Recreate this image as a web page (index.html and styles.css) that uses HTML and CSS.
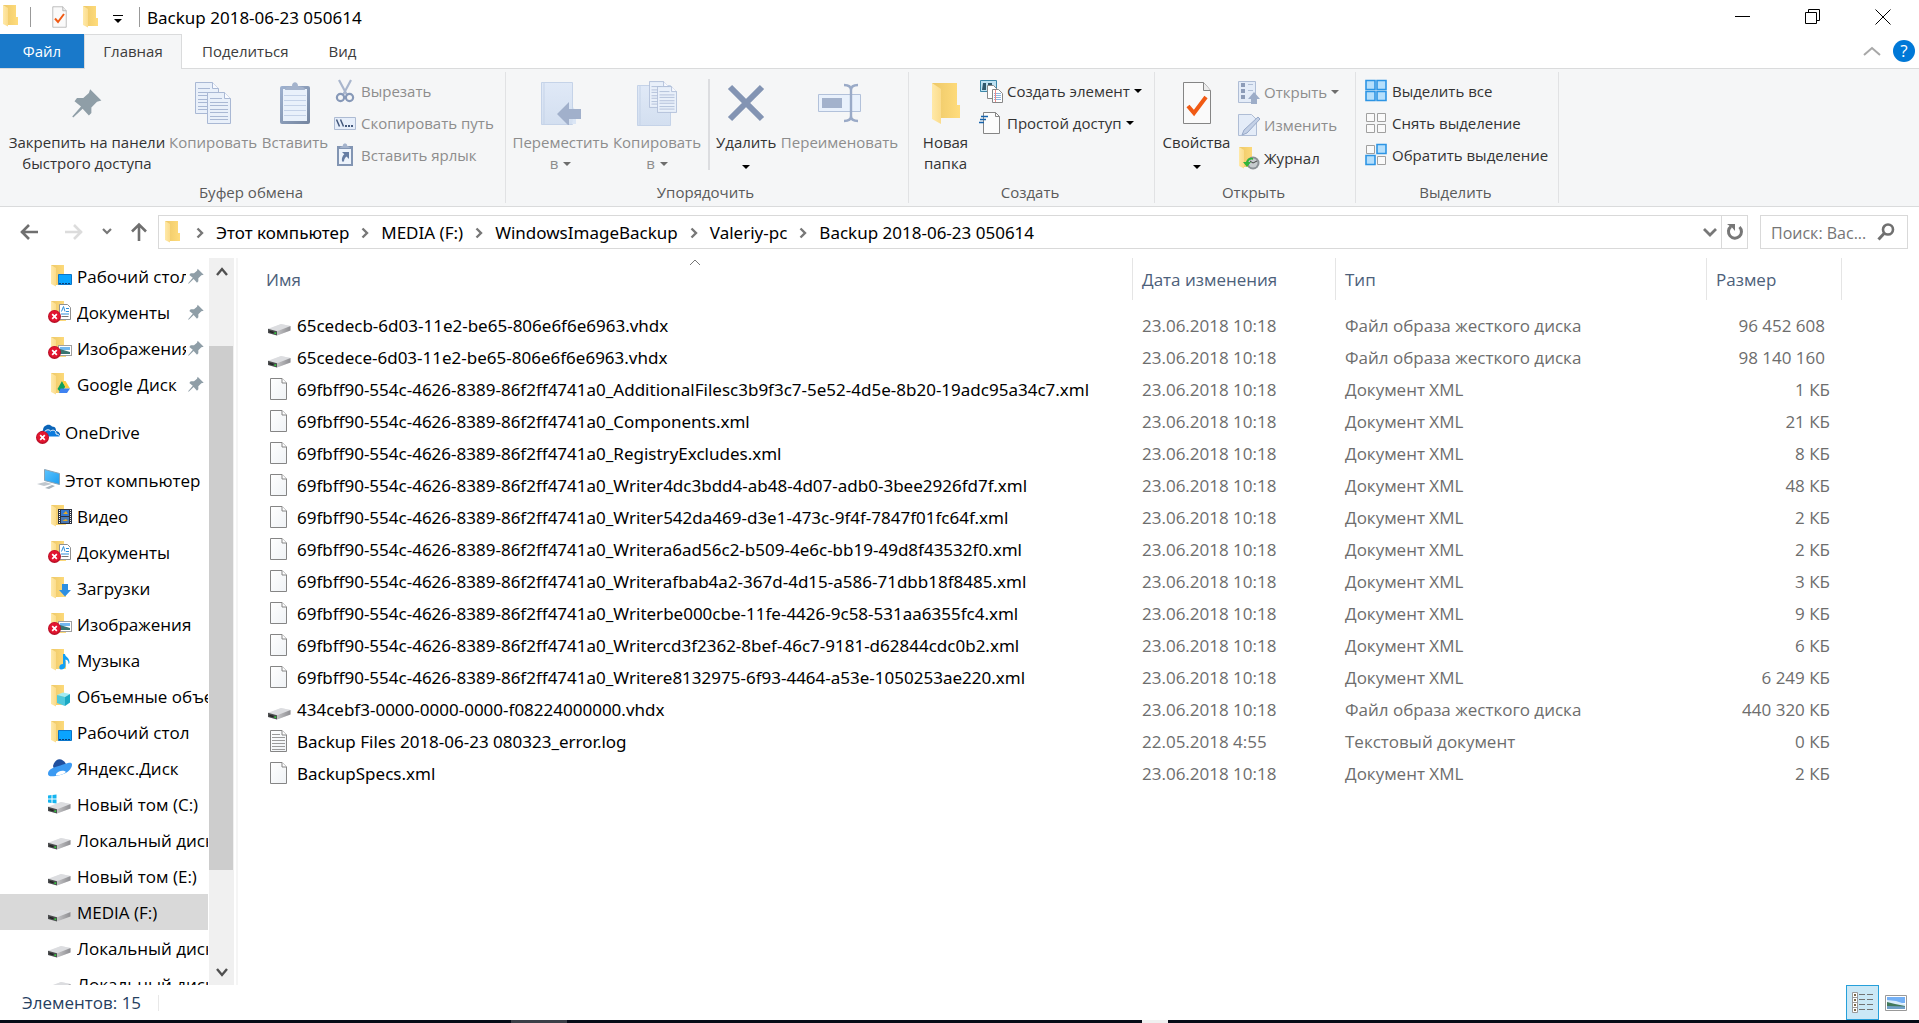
FILE: index.html
```html
<!DOCTYPE html>
<html lang="ru">
<head>
<meta charset="utf-8">
<meta name="viewport" content="width=device-width, initial-scale=1">
<title>Backup 2018-06-23 050614</title>
<link rel="stylesheet" href="styles.css">
</head>
<body>
<svg class="sprite" aria-hidden="true">
  <defs>
    <linearGradient id="g-folder" x1="0" x2="1"><stop offset="0" stop-color="#edc868"/><stop offset="1" stop-color="#ffdc7c"/></linearGradient>
    <linearGradient id="g-flap" x1="0" x2="1"><stop offset="0" stop-color="#ffe9a8"/><stop offset="1" stop-color="#fbdc8c"/></linearGradient>
    <linearGradient id="g-drive" x1="0" x2="1"><stop offset="0" stop-color="#c4c4c6"/><stop offset="1" stop-color="#8e8e92"/></linearGradient>
    <linearGradient id="g-page" x1="0" y1="0" x2="1" y2="1"><stop offset="0" stop-color="#ffffff"/><stop offset="1" stop-color="#eff2f5"/></linearGradient>
    <linearGradient id="g-clip" x1="0" y1="0" x2="1" y2="1"><stop offset="0" stop-color="#9fb2d0"/><stop offset="1" stop-color="#74859f"/></linearGradient>
    <linearGradient id="g-screen" x1="0" y1="0" x2="1" y2="1"><stop offset="0" stop-color="#5cc4ff"/><stop offset="1" stop-color="#1d9df0"/></linearGradient>
    <linearGradient id="g-book" x1="0" y1="0" x2="0" y2="1"><stop offset="0" stop-color="#e0e9f7"/><stop offset="1" stop-color="#d3dff0"/></linearGradient>
  </defs>
  <symbol id="folder" viewBox="0 0 24 24">
    <path d="M3 1h13v12h2v8H6z" fill="url(#g-folder)"/>
    <path d="M3 1l5 3v18.500L3 20z" fill="url(#g-flap)"/>
  </symbol>
  <symbol id="error" viewBox="0 0 24 24">
    <circle cx="6.500" cy="16.500" r="6.500" fill="#b80e26"/><circle cx="6.500" cy="16" r="5.500" fill="#e2152f"/>
    <path d="M4.200 14.200l4.600 4.600m0-4.600l-4.600 4.600" stroke="#fff" stroke-width="1.700"/>
  </symbol>
  <symbol id="page" viewBox="0 1 24 24">
    <path d="M2.500 1.500h11.500l4.500 4.500v16.500h-16z" fill="url(#g-page)" stroke="#858585"/>
    <path d="M14 1.500V6h4.500" fill="#fff" stroke="#858585"/>
  </symbol>
  <symbol id="log" viewBox="0 0 24 24">
    <use href="#page"/>
    <path d="M4 4.500h8m-8 3h13m-13 3h13m-13 3h13m-13 3h13m-13 3h13" stroke="#9a9a9a"/>
  </symbol>
  <symbol id="drive" viewBox="0 0 24 24">
    <path d="M0 15.500l13-5.500 9.500 2v4.500L9 21.500 0 19z" fill="#e8e8ea"/>
    <path d="M0 14.800l13-4.800 9.500 2L9 17.200z" fill="#dcdde0"/>
    <path d="M9 17.200l13.500-5.200v4.500L9 21.500z" fill="url(#g-drive)"/>
    <path d="M0 14.800l9 2.400v4.300l-9-2.400z" fill="#4b4d4f"/>
    <path d="M1.500 17.500l4 1" stroke="#222" stroke-width="1.400"/><path d="M6.500 19l1.600.4" stroke="#2fd43a" stroke-width="1.600"/>
  </symbol>
  <symbol id="pin" viewBox="0 0 24 24">
    <path d="M14.500 1l9 9-3.500 1-4.500 4.500V20l-2 2-5-5.500L1 23.500l-.8-.8 7-8L2 10.500 4 8h5l4.500-4z" fill="#8f9ea7"/>
  </symbol>
  <symbol id="doc-folder" viewBox="0 0 24 24">
    <use href="#folder"/><path d="M11.500 4.500h8l3 3v12h-11z" fill="#fff" stroke="#909090"/>
    <path d="M13.500 11.500l2-5 1.500 5m1-3h3m-3 3h3m-8 2.500h8" stroke="#2f8fd8" fill="none"/><path d="M13.500 16.500h7" stroke="#777"/>
    <use href="#error"/>
  </symbol>
  <symbol id="pic-folder" viewBox="0 0 24 24">
    <use href="#folder"/><rect x="10.500" y="9.500" width="13" height="10" fill="#fff" stroke="#a0a0a0"/>
    <path d="M12 11h10v3H12z" fill="#72b7ee"/><path d="M12 13l5 1.500 5 1.500v2H12z" fill="#39746f"/><use href="#error"/>
  </symbol>
  <symbol id="desk-folder" viewBox="0 0 24 24">
    <use href="#folder"/><path d="M10.500 10.500h13v10h-13z" fill="#0aa4ff" stroke="#0b75c9"/><path d="M11 19.500h12" stroke="#0b3f77" stroke-dasharray="2 1"/>
  </symbol>
  <symbol id="gdrive-folder" viewBox="0 0 24 24">
    <use href="#folder"/><path d="M14 9l3.500 5.500L13 21l-3.500-4z" fill="#11a05c"/><path d="M14 9h3.500l4.500 7.500h-4z" fill="#ffcd40"/><path d="M12.500 16.500H22L19 21h-8z" fill="#3e82f1"/>
  </symbol>
  <symbol id="video-folder" viewBox="0 0 24 24">
    <use href="#folder"/><path d="M10 5h14v15H10z" fill="#2e3340"/><path d="M13 6h8v6h-8z" fill="#3577cf"/><path d="M13 13h8v6h-8z" fill="#4979b5"/>
    <path d="M15 10l3-3 2 3zM14 17l4-2 2 2z" fill="#e4aa2a"/><path d="M11.500 6v13m11-13v13" stroke="#fff" stroke-dasharray="1 1"/>
  </symbol>
  <symbol id="down-folder" viewBox="0 0 24 24">
    <use href="#folder"/><path d="M14 8h6v6h3l-6 6.500L11 14h3z" fill="#2d8fe2"/>
  </symbol>
  <symbol id="music-folder" viewBox="0 0 24 24">
    <use href="#folder"/><path d="M15 6h2c0 3 5 3.500 4.500 9l-1 1c0-3-1-4-3-4.500V18c0 2-2 3.500-4.500 3.500S10.500 16 15 16z" fill="#12a0f5"/>
  </symbol>
  <symbol id="cube-folder" viewBox="0 0 24 24">
    <use href="#folder"/><path d="M9 11l6-2.500 7 1.500-5 3z" fill="#a3ebf2"/><path d="M9 11l8 2v9l-8-3z" fill="#4fc8dc"/><path d="M17 13l5-3v8.500l-5 3.500z" fill="#1ba9c4"/>
  </symbol>
  <symbol id="onedrive" viewBox="0 0 24 24">
    <path d="M7 10.500C7 5.500 13 3 16 6.500c4 0 4 3 4 4.500 5 1 5 5.500 2 6H6c-4-1-3.500-6 1-6.500z" fill="#0a64b8"/>
    <path d="M8 13c1-3.500 5-4 6.500-2 3-2 6 0 5.500 3 4 .2 4 3 2.500 3H9c-3-.5-3-3.500-1-4z" fill="#0c7bdd" stroke="#fff"/>
    <use href="#error" y="1"/>
  </symbol>
  <symbol id="pc" viewBox="0 0 24 24">
    <path d="M8.500 1.500l15 4v11l-15-4z" fill="url(#g-screen)" stroke="#8aa3b5"/><path d="M1 16l8-2 7 2-8 2z" fill="#c0c7cd"/><path d="M9 20l7-3 3 1-6 3z" fill="#a9b3bb"/>
  </symbol>
  <symbol id="yadisk" viewBox="0 0 24 24">
    <path d="M5 10C7 2 14 1 18 8l-3 5H6z" fill="#1f4f9e"/><path d="M0 18c0-4 4-6 9-7.500 6-1.500 14-6 15-2.500.5 4-4 9-10 10.500C8 20 0 22 0 18z" fill="#3b9af2"/><path d="M8 18c3-4 8-4 10-2-2 2-6 3.500-10 3.500z" fill="#fff"/>
  </symbol>
  <symbol id="windrive" viewBox="0 0 24 24">
    <use href="#drive"/><path d="M0 3.500l3.500-.5v3.500H0zM4.500 3L8.500 2.500v4h-4zM0 7.500h3.500V11L0 10.500zM4.500 7.500h4v4l-4-.5z" fill="#14b4f0"/>
  </symbol>
  <symbol id="caret" viewBox="0 0 8 4"><path d="M0 0h8L4 4z" fill="currentColor"/></symbol>
  <symbol id="chevron" viewBox="0 0 8 12"><path d="M1.500 1.500L6 6l-4.500 4.500" fill="none" stroke="#777" stroke-width="2.400"/></symbol>
  <symbol id="check-page" viewBox="0 0 34 44">
    <path d="M1.500 1.500h20l7 8v33h-27z" fill="#fafafa" stroke="#858585" transform="translate(2)"/><path d="M23.500 1.500v8h7" fill="#ececec" stroke="#858585"/>
    <path d="M8 25l6 7 12-16" fill="none" stroke="#f05a14" stroke-width="4"/>
  </symbol>
  <symbol id="lined-page" viewBox="0 0 24 32">
    <path d="M.5.500h17l6 6v25H.5z" fill="#e9f0fa" stroke="#a9b8d4"/><path d="M17.500.500v6h6" fill="#f8faff" stroke="#a9b8d4"/>
    <path d="M3 6.500h12M3 10.500h18M3 13.500h18M3 17.500h18M3 20.500h18M3 24.500h18M3 27.500h18" stroke="#a9b8d4"/>
  </symbol>
</svg>

<div class="window">
  <header class="titlebar">
    <div class="quick">
      <svg class="i24 quick-app"><use href="#folder"/></svg>
      <span class="tick"></span>
      <button type="button" class="plain quick-check" aria-label="Свойства"><svg width="17" height="22"><use href="#check-page"/></svg></button>
      <button type="button" class="plain" aria-label="Новая папка"><svg class="i24"><use href="#folder"/></svg></button>
      <button type="button" class="plain quick-more" aria-label="Настройка панели"><svg width="10" height="8" viewBox="0 0 10 8"><path d="M0 .500h10" stroke="#000"/><path d="M1 4h8L5 8z"/></svg></button>
      <span class="tick"></span>
    </div>
    <h1 class="title">Backup 2018-06-23 050614</h1>
    <div class="controls">
      <button type="button" class="plain control" aria-label="Свернуть"><svg width="16" height="16"><path d="M0 7.500h15" stroke="#000"/></svg></button>
      <button type="button" class="plain control" aria-label="Свернуть в окно"><svg width="16" height="16"><path d="M.5 3.500h11v11H.5zM3.500 3.500v-3h11v11h-3" fill="none" stroke="#000"/></svg></button>
      <button type="button" class="plain control" aria-label="Закрыть"><svg width="16" height="16"><path d="M.5.500l15 15m0-15l-15 15" stroke="#000"/></svg></button>
    </div>
  </header>

  <nav class="tabs">
    <button type="button" class="tab tab-file">Файл</button>
    <button type="button" class="tab tab-active">Главная</button>
    <button type="button" class="tab">Поделиться</button>
    <button type="button" class="tab">Вид</button>
    <div class="tabs-end">
      <button type="button" class="plain" aria-label="Свернуть ленту"><svg width="18" height="10"><path d="M1 9l8-7 8 7" fill="none" stroke="#a8a8a8" stroke-width="2"/></svg></button>
      <button type="button" class="plain help" aria-label="Справка">?</button>
    </div>
  </nav>

  <section class="ribbon">
    <section class="group group-clipboard">
      <div class="group-body">
        <button type="button" class="big"><span class="big-icon"><svg width="30" height="30"><use href="#pin"/></svg></span>Закрепить на панели<br>быстрого доступа</button>
        <button type="button" class="big" disabled><span class="big-icon"><svg width="36" height="42"><use href="#lined-page" width="24" height="32"/><use href="#lined-page" x="12" y="10" width="24" height="32"/></svg></span>Копировать</button>
        <button type="button" class="big" disabled><span class="big-icon"><svg width="30" height="44"><rect y="5" width="30" height="38" rx="2" fill="url(#g-clip)"/><path d="M3 8h24v32H3z" fill="#e9f1fb"/><path d="M4 14.500h22m-22 5h22m-22 5h22m-22 5h22m-22 5h22" stroke="#c4d2e8"/><path d="M5 9c0-4 5-3 7-4 0-5 6-5 6 0 2 1 7 0 7 4z" fill="#a4b3cc"/></svg></span>Вставить</button>
        <div class="stack">
          <button type="button" class="small" disabled><svg class="i24" viewBox="0 0 24 24"><path d="M6 1l8 15M18 1l-8 15" stroke="#a9b6cd" stroke-width="2.200"/><circle cx="7.500" cy="18.500" r="3.600" fill="none" stroke="#8799b8" stroke-width="2.200"/><circle cx="16.500" cy="18.500" r="3.600" fill="none" stroke="#8799b8" stroke-width="2.200"/></svg>Вырезать</button>
          <button type="button" class="small" disabled><svg class="i24" viewBox="0 0 24 24"><path d="M1.500 6.500h21v12h-21z" fill="#e6eefa" stroke="#adbbd3"/><path d="M3.500 8.500l3 7m1-7l3 7" stroke="#43587c" stroke-width="1.500"/><path d="M12 15h2m1 0h2m1 0h2" stroke="#43587c" stroke-width="2"/></svg>Скопировать путь</button>
          <button type="button" class="small" disabled><svg class="i24" viewBox="0 0 24 24"><rect x="4" y="3" width="16" height="20" fill="#8295b3"/><path d="M6 6h12v15H6z" fill="#edf3fb"/><path d="M7 5c0-2 3-1 3-3 0-2 4-2 4 0 0 2 3 1 3 3z" fill="#a4b3cc"/><path d="M9 9h7v7l-2.500-2.500C12 15 11 16 11 18.500H9C8.500 15 9.500 13 11.300 11.300z" fill="#667da3"/></svg>Вставить ярлык</button>
        </div>
      </div>
      <h2 class="group-label">Буфер обмена</h2>
    </section>

    <section class="group group-organize">
      <div class="group-body">
        <button type="button" class="big" disabled><span class="big-icon"><svg width="40" height="44"><path d="M.5 1.500h31v42H.5z" fill="url(#g-book)" stroke="#c5d3e8"/><path d="M3 2v41" stroke="#c5d3e8"/><path d="M32 26l3 4v13h-4z" fill="#dbe6f5"/><path d="M16 33l12-12v7h12v10H28v7z" fill="#a1b0cb"/></svg></span>Переместить<br><span class="with-caret">в <svg class="caret"><use href="#caret"/></svg></span></button>
        <button type="button" class="big" disabled><span class="big-icon"><svg width="40" height="45"><path d="M.5 4.500h33v40H.5z" fill="url(#g-book)" stroke="#c5d3e8"/><path d="M3 5v40" stroke="#c5d3e8"/><use href="#lined-page" x="12" width="20" height="27"/><use href="#lined-page" x="20" y="5" width="20" height="27"/></svg></span>Копировать<br><span class="with-caret">в <svg class="caret"><use href="#caret"/></svg></span></button>
        <span class="rule"></span>
        <button type="button" class="big"><span class="big-icon"><svg width="38" height="38"><path d="M3 3l32 32M35 3L3 35" stroke="#8394b3" stroke-width="6"/></svg></span>Удалить<br><span class="with-caret"><svg class="caret"><use href="#caret"/></svg></span></button>
        <button type="button" class="big" disabled><span class="big-icon"><svg width="44" height="40"><path d="M.5 11.500h42v17H.5z" fill="#e9f1fc" stroke="#b2c1da"/><path d="M4 15h20v10H4z" fill="#a3b2cc"/><path d="M26 2c4 0 7 1 7 5v26c0 4-3 5-7 5M40 2c-4 0-7 1-7 5v26c0 4 3 5 7 5" fill="none" stroke="#9aaac7" stroke-width="2.400"/></svg></span>Переименовать</button>
      </div>
      <h2 class="group-label">Упорядочить</h2>
    </section>

    <section class="group group-new">
      <div class="group-body">
        <button type="button" class="big"><span class="big-icon"><svg width="32" height="44"><path d="M2 2h25v22h3v13H8z" fill="url(#g-folder)"/><path d="M2 2l9 6v35L2 38z" fill="url(#g-flap)"/></svg></span>Новая<br>папка</button>
        <div class="stack">
          <button type="button" class="small"><svg class="i24" viewBox="0 0 24 24"><path d="M1.500 1.500h16v11h-16z" fill="#bfe2f2" stroke="#3c87a8"/><path d="M4 4h3v7H3zM9 4h4v3H9z" fill="#31596d"/><path d="M8.500 6.500h6l4 4v9h-10z" fill="#fff" stroke="#888"/><path d="M13.500 10.500h6l4 4v9h-10z" fill="#fff" stroke="#888"/><path d="M15 14.500h7m-7 2h7m-7 2h7m-7 2h7" stroke="#8fb5df"/><path d="M16.500 11v12" stroke="#f08a8a"/></svg>Создать элемент<svg class="caret"><use href="#caret"/></svg></button>
          <button type="button" class="small"><svg class="i24" viewBox="0 0 24 24"><path d="M4.500 1.500h12l4 4v17h-16z" fill="#fcfcfc" stroke="#858585"/><path d="M16.500 1.500v4h4" fill="none" stroke="#858585"/><path d="M2 5.500h7m-8 3h6m-7 3h5" stroke="#1763ac" stroke-width="1.500"/></svg>Простой доступ<svg class="caret"><use href="#caret"/></svg></button>
        </div>
      </div>
      <h2 class="group-label">Создать</h2>
    </section>

    <section class="group group-open">
      <div class="group-body">
        <button type="button" class="big"><span class="big-icon"><svg width="34" height="44"><use href="#check-page"/></svg></span>Свойства<br><span class="with-caret"><svg class="caret"><use href="#caret"/></svg></span></button>
        <div class="stack stack-loose">
          <button type="button" class="small" disabled><svg class="i24" viewBox="0 0 24 24"><path d="M2.500 1.500h17v21h-17z" fill="#e4ecf8" stroke="#afbdd5"/><path d="M5 3h4v4H5zM5 9h4v4H5zM5 15h4v4H5z" fill="#8d9cb8"/><path d="M12 4.500h5m-5 6h5" stroke="#b0bfd6"/><path d="M18 12l6 7h-3v5h-6v-5h-3z" fill="#9dadc8"/></svg>Открыть<svg class="caret"><use href="#caret"/></svg></button>
          <button type="button" class="small" disabled><svg class="i24" viewBox="0 0 24 24"><path d="M2.500 1.500h13l5 5v16h-18z" fill="#e4ecf8" stroke="#afbdd5"/><path d="M22 4l2 2L11 20l-5 2 2-5z" fill="#c3d0e6" stroke="#97a9c8"/></svg>Изменить</button>
          <button type="button" class="small"><svg class="i24" viewBox="0 0 24 24"><use href="#folder"/><circle cx="17" cy="17" r="6.500" fill="#8b9196"/><circle cx="17" cy="17" r="4.500" fill="#c6cbce"/><path d="M14 15l3 2 4-2" stroke="#444" fill="none"/><path d="M17 12c-4-1-6 1-7 4H7l4 5 4-5h-3c1-2 3-3 5-2z" fill="#2fb43b"/></svg>Журнал</button>
        </div>
      </div>
      <h2 class="group-label">Открыть</h2>
    </section>

    <section class="group group-select">
      <div class="group-body">
        <div class="stack">
          <button type="button" class="small"><svg class="i24" viewBox="0 0 24 24"><path d="M2 1.500h9v9H2zM13 1.500h9v9h-9zM2 12.500h9v9H2zM13 12.500h9v9h-9z" fill="#b5dffc" stroke="#2d95e4" stroke-width="1.600"/></svg>Выделить все</button>
          <button type="button" class="small"><svg class="i24" viewBox="0 0 24 24"><path d="M2.500 2.500h8v8h-8zM13.500 2.500h8v8h-8zM2.500 13.500h8v8h-8zM13.500 13.500h8v8h-8z" fill="#fafafa" stroke="#a0a0a0"/></svg>Снять выделение</button>
          <button type="button" class="small"><svg class="i24" viewBox="0 0 24 24"><path d="M2.500 2.500h8v8h-8zM13.500 13.500h8v8h-8z" fill="#fafafa" stroke="#a0a0a0"/><path d="M13 1.500h9v9h-9zM2 12.500h9v9H2z" fill="#b5dffc" stroke="#2d95e4" stroke-width="1.600"/></svg>Обратить выделение</button>
        </div>
      </div>
      <h2 class="group-label">Выделить</h2>
    </section>
  </section>

  <div class="location">
    <div class="history">
      <button type="button" class="plain back" aria-label="Назад"><svg width="20" height="18"><path d="M19 9H2m8-7L3 9l7 7" fill="none" stroke="#6f6f6f" stroke-width="2.600"/></svg></button>
      <button type="button" class="plain" aria-label="Вперед"><svg width="20" height="18"><path d="M1 9h17m-8-7l7 7-7 7" fill="none" stroke="#dcdcdc" stroke-width="2.600"/></svg></button>
      <button type="button" class="plain" aria-label="Последние"><svg width="10" height="8"><path d="M1 1l4 4 4-4" fill="none" stroke="#777" stroke-width="2.200"/></svg></button>
      <button type="button" class="plain" aria-label="Вверх"><svg width="18" height="20"><path d="M9 19V3M2 9.500l7-7 7 7" fill="none" stroke="#6f6f6f" stroke-width="2.600"/></svg></button>
    </div>
    <div class="address">
      <svg class="i24"><use href="#folder"/></svg>
      <ol class="crumbs">
        <li class="crumb"><svg class="chevron"><use href="#chevron"/></svg><a href="#pc">Этот компьютер</a></li>
        <li class="crumb"><svg class="chevron"><use href="#chevron"/></svg><a href="#f">MEDIA (F:)</a></li>
        <li class="crumb"><svg class="chevron"><use href="#chevron"/></svg><a href="#wib">WindowsImageBackup</a></li>
        <li class="crumb"><svg class="chevron"><use href="#chevron"/></svg><a href="#vpc">Valeriy-pc</a></li>
        <li class="crumb"><svg class="chevron"><use href="#chevron"/></svg><a href="#backup">Backup 2018-06-23 050614</a></li>
      </ol>
      <button type="button" class="plain drop" aria-label="Предыдущие расположения"><svg width="14" height="10"><path d="M1 2l6 6 6-6" fill="none" stroke="#777" stroke-width="2.800"/></svg></button>
      <button type="button" class="plain refresh" aria-label="Обновить"><svg width="18" height="18"><path d="M5 3.500A6.500 6.500 0 1 0 13.500 4" fill="none" stroke="#777" stroke-width="3"/><path d="M1 1h8v7L6.500 5z" fill="#777"/></svg></button>
    </div>
    <label class="search">
      <input type="text" placeholder="Поиск: Вас..." aria-label="Поиск">
      <svg width="18" height="18"><circle cx="11" cy="6.500" r="5" fill="none" stroke="#707070" stroke-width="2.600"/><path d="M7.500 10L1.500 16.500" stroke="#707070" stroke-width="3"/></svg>
    </label>
  </div>

  <div class="content">
    <aside class="sidebar">
      <ul class="tree">
        <li class="node"><svg class="i24"><use href="#desk-folder"/></svg><span class="node-text">Рабочий стол</span><svg class="node-pin"><use href="#pin"/></svg></li>
        <li class="node"><svg class="i24"><use href="#doc-folder"/></svg><span class="node-text">Документы</span><svg class="node-pin"><use href="#pin"/></svg></li>
        <li class="node"><svg class="i24"><use href="#pic-folder"/></svg><span class="node-text">Изображения</span><svg class="node-pin"><use href="#pin"/></svg></li>
        <li class="node"><svg class="i24"><use href="#gdrive-folder"/></svg><span class="node-text">Google Диск</span><svg class="node-pin"><use href="#pin"/></svg></li>
        <li class="node node-root"><svg class="i24"><use href="#onedrive"/></svg><span class="node-text">OneDrive</span></li>
        <li class="node node-root"><svg class="i24"><use href="#pc"/></svg><span class="node-text">Этот компьютер</span></li>
        <li class="node"><svg class="i24"><use href="#video-folder"/></svg><span class="node-text">Видео</span></li>
        <li class="node"><svg class="i24"><use href="#doc-folder"/></svg><span class="node-text">Документы</span></li>
        <li class="node"><svg class="i24"><use href="#down-folder"/></svg><span class="node-text">Загрузки</span></li>
        <li class="node"><svg class="i24"><use href="#pic-folder"/></svg><span class="node-text">Изображения</span></li>
        <li class="node"><svg class="i24"><use href="#music-folder"/></svg><span class="node-text">Музыка</span></li>
        <li class="node"><svg class="i24"><use href="#cube-folder"/></svg><span class="node-text">Объемные объекты</span></li>
        <li class="node"><svg class="i24"><use href="#desk-folder"/></svg><span class="node-text">Рабочий стол</span></li>
        <li class="node"><svg class="i24"><use href="#yadisk"/></svg><span class="node-text">Яндекс.Диск</span></li>
        <li class="node"><svg class="i24"><use href="#windrive"/></svg><span class="node-text">Новый том (C:)</span></li>
        <li class="node"><svg class="i24"><use href="#drive"/></svg><span class="node-text">Локальный диск (D:)</span></li>
        <li class="node"><svg class="i24"><use href="#drive"/></svg><span class="node-text">Новый том (E:)</span></li>
        <li class="node node-current"><svg class="i24"><use href="#drive"/></svg><span class="node-text">MEDIA (F:)</span></li>
        <li class="node"><svg class="i24"><use href="#drive"/></svg><span class="node-text">Локальный диск (G:)</span></li>
        <li class="node"><svg class="i24"><use href="#drive"/></svg><span class="node-text">Локальный диск (H:)</span></li>
      </ul>
      <div class="scrollbar">
        <button type="button" class="plain scroll-button" aria-label="Прокрутить вверх"><svg width="14" height="12"><path d="M2 9l5-6 5 6" fill="none" stroke="#505050" stroke-width="2.400"/></svg></button>
        <div class="track"><div class="thumb"></div></div>
        <button type="button" class="plain scroll-button" aria-label="Прокрутить вниз"><svg width="14" height="12"><path d="M2 3l5 6 5-6" fill="none" stroke="#505050" stroke-width="2.400"/></svg></button>
      </div>
    </aside>

    <main class="files">
      <table class="list">
        <colgroup><col class="col-name"><col class="col-date"><col class="col-type"><col class="col-size"></colgroup>
        <thead>
          <tr>
            <th scope="col"><div class="head">Имя<svg class="sort" width="13" height="7"><path d="M1 6l5-5 5 5" fill="none" stroke="#777"/></svg></div></th>
            <th scope="col"><div class="head">Дата изменения</div></th>
            <th scope="col"><div class="head">Тип</div></th>
            <th scope="col"><div class="head">Размер</div></th>
          </tr>
        </thead>
        <tbody>
          <tr><td><div class="file"><svg class="i24"><use href="#drive"/></svg>65cedecb-6d03-11e2-be65-806e6f6e6963.vhdx</div></td><td>23.06.2018 10:18</td><td>Файл образа жесткого диска</td><td class="size size-clipped">96 452 608</td></tr>
          <tr><td><div class="file"><svg class="i24"><use href="#drive"/></svg>65cedece-6d03-11e2-be65-806e6f6e6963.vhdx</div></td><td>23.06.2018 10:18</td><td>Файл образа жесткого диска</td><td class="size size-clipped">98 140 160</td></tr>
          <tr><td><div class="file"><svg class="i24"><use href="#page"/></svg>69fbff90-554c-4626-8389-86f2ff4741a0_AdditionalFilesc3b9f3c7-5e52-4d5e-8b20-19adc95a34c7.xml</div></td><td>23.06.2018 10:18</td><td>Документ XML</td><td class="size">1 КБ</td></tr>
          <tr><td><div class="file"><svg class="i24"><use href="#page"/></svg>69fbff90-554c-4626-8389-86f2ff4741a0_Components.xml</div></td><td>23.06.2018 10:18</td><td>Документ XML</td><td class="size">21 КБ</td></tr>
          <tr><td><div class="file"><svg class="i24"><use href="#page"/></svg>69fbff90-554c-4626-8389-86f2ff4741a0_RegistryExcludes.xml</div></td><td>23.06.2018 10:18</td><td>Документ XML</td><td class="size">8 КБ</td></tr>
          <tr><td><div class="file"><svg class="i24"><use href="#page"/></svg>69fbff90-554c-4626-8389-86f2ff4741a0_Writer4dc3bdd4-ab48-4d07-adb0-3bee2926fd7f.xml</div></td><td>23.06.2018 10:18</td><td>Документ XML</td><td class="size">48 КБ</td></tr>
          <tr><td><div class="file"><svg class="i24"><use href="#page"/></svg>69fbff90-554c-4626-8389-86f2ff4741a0_Writer542da469-d3e1-473c-9f4f-7847f01fc64f.xml</div></td><td>23.06.2018 10:18</td><td>Документ XML</td><td class="size">2 КБ</td></tr>
          <tr><td><div class="file"><svg class="i24"><use href="#page"/></svg>69fbff90-554c-4626-8389-86f2ff4741a0_Writera6ad56c2-b509-4e6c-bb19-49d8f43532f0.xml</div></td><td>23.06.2018 10:18</td><td>Документ XML</td><td class="size">2 КБ</td></tr>
          <tr><td><div class="file"><svg class="i24"><use href="#page"/></svg>69fbff90-554c-4626-8389-86f2ff4741a0_Writerafbab4a2-367d-4d15-a586-71dbb18f8485.xml</div></td><td>23.06.2018 10:18</td><td>Документ XML</td><td class="size">3 КБ</td></tr>
          <tr><td><div class="file"><svg class="i24"><use href="#page"/></svg>69fbff90-554c-4626-8389-86f2ff4741a0_Writerbe000cbe-11fe-4426-9c58-531aa6355fc4.xml</div></td><td>23.06.2018 10:18</td><td>Документ XML</td><td class="size">9 КБ</td></tr>
          <tr><td><div class="file"><svg class="i24"><use href="#page"/></svg>69fbff90-554c-4626-8389-86f2ff4741a0_Writercd3f2362-8bef-46c7-9181-d62844cdc0b2.xml</div></td><td>23.06.2018 10:18</td><td>Документ XML</td><td class="size">6 КБ</td></tr>
          <tr><td><div class="file"><svg class="i24"><use href="#page"/></svg>69fbff90-554c-4626-8389-86f2ff4741a0_Writere8132975-6f93-4464-a53e-1050253ae220.xml</div></td><td>23.06.2018 10:18</td><td>Документ XML</td><td class="size">6 249 КБ</td></tr>
          <tr><td><div class="file"><svg class="i24"><use href="#drive"/></svg>434cebf3-0000-0000-0000-f08224000000.vhdx</div></td><td>23.06.2018 10:18</td><td>Файл образа жесткого диска</td><td class="size">440 320 КБ</td></tr>
          <tr><td><div class="file"><svg class="i24"><use href="#log"/></svg>Backup Files 2018-06-23 080323_error.log</div></td><td>22.05.2018 4:55</td><td>Текстовый документ</td><td class="size">0 КБ</td></tr>
          <tr><td><div class="file"><svg class="i24"><use href="#page"/></svg>BackupSpecs.xml</div></td><td>23.06.2018 10:18</td><td>Документ XML</td><td class="size">2 КБ</td></tr>
        </tbody>
      </table>
    </main>
  </div>

  <footer class="status">
    <span class="count">Элементов: 15</span>
    <div class="views">
      <button type="button" class="plain view view-active" aria-label="Таблица"><svg width="22" height="22"><path d="M.5.500h5v20h-5zM.5 5.500h5m-5 5h5m-5 5h5" fill="#fff" stroke="#9a9a9a"/><path d="M2 3h2m-2 5h2m-2 5h2m-2 5h2" stroke="#7b6a4a" stroke-width="2"/><path d="M7 2.500h6m2 0h6m-14 5h6m2 0h6m-14 5h6m2 0h6m-14 5h6m2 0h6" stroke="#737373"/></svg></button>
      <button type="button" class="plain view" aria-label="Крупные значки"><svg width="22" height="16"><path d="M.5.500h21v15H.5z" fill="#fff" stroke="#999"/><path d="M2 2h18v6H2z" fill="#74b0f5"/><path d="M2 5l9 1 9 3v2H2z" fill="#d9ecfb"/><path d="M2 7l8 2 10 2v1H2z" fill="#42795a"/><path d="M2 11l18 .5V14H2z" fill="#6f9fc6"/></svg></button>
    </div>
  </footer>
  <div class="taskbar"><span class="task task-open"></span><span class="task task-active"></span></div>
</div>
</body>
</html>
```
FILE: styles.css
```css
* { box-sizing: border-box; }

body {
  margin: 0;
  font: 17px/24px "Open Sans", "Noto Sans", sans-serif;
  color: #000;
  background: #fff;
}

h1, h2, ol, ul { margin: 0; padding: 0; font: inherit; list-style: none; }
button { font: inherit; color: inherit; background: none; border: 0; padding: 0; }
a { color: inherit; text-decoration: none; }
svg { display: block; flex: none; }

.sprite { position: absolute; width: 0; height: 0; }
.i24 { width: 24px; height: 24px; }
.plain { display: flex; align-items: center; justify-content: center; }

.window { display: flex; flex-direction: column; height: 100vh; overflow: hidden; }

/* Title bar */
.titlebar { display: flex; align-items: center; height: 34px; flex: none; }
.quick { display: flex; align-items: center; height: 34px; }
.quick-app { margin: 0 6px 2px 0; }
.tick { width: 1px; height: 20px; background: #999; }
.quick-check { margin: 0 12px 0 20px; }
.quick-more { margin: 4px 16px 0 9px; }
.title { flex: 1; padding: 2px 0 0 7px; line-height: 32px; font-family: "Noto Sans", sans-serif; }
.controls { display: flex; gap: 54px; padding-right: 28px; }

/* Ribbon tabs */
.tabs {
  display: flex;
  flex: none;
  height: 35px;
  font-size: 15px;
  color: #3c3c3c;
  border-bottom: 1px solid #dadbdc;
}
.tab { padding: 0 20px; height: 34px; }
.tab-file { width: 84px; color: #fff; background: #1979ca; }
.tab-active {
  width: 98px;
  height: 35px;
  padding: 0 0 2px;
  background: #f5f6f7;
  border: 1px solid #dadbdc;
  border-bottom: 0;
}
.tabs-end { display: flex; align-items: center; gap: 12px; margin-left: auto; padding-right: 4px; }
.help { width: 22px; height: 22px; border-radius: 50%; background: #0078d7; color: #fff; font-size: 17px; }

/* Ribbon */
.ribbon {
  display: flex;
  flex: none;
  height: 138px;
  padding: 3px 0;
  font-size: 15px;
  line-height: 21px;
  color: #333;
  background: #f5f6f7;
  border-bottom: 1px solid #dadbdc;
}
.group { display: flex; flex-direction: column; border-right: 1px solid #e1e2e4; }
.group-body { display: grid; height: 110px; align-items: start; }
.group-label { padding-right: 3px; text-align: center; color: #5a5a5a; }
.group-clipboard { width: 506px; }
.group-clipboard .group-body { grid-template-columns: 164px 88px 76px 1fr; padding-left: 5px; }
.group-organize { width: 403px; }
.group-organize .group-body { grid-template-columns: 103px 90px 14px 60px 1fr; padding: 0 5px 0 3px; }
.group-new { width: 246px; }
.group-new .group-body { grid-template-columns: 67px 1fr; padding-left: 3px; }
.group-open { width: 201px; }
.group-open .group-body { grid-template-columns: 79px 1fr; padding-left: 2px; }
.group-select { width: 203px; }
.group-select .group-body { padding-left: 8px; }

.big { padding-top: 6px; white-space: nowrap; text-align: center; }
.big-icon { display: flex; align-items: center; justify-content: center; height: 50px; margin-bottom: 4px; }
.with-caret { display: inline-flex; align-items: center; justify-content: center; gap: 5px; height: 16px; }
.caret { width: 8px; height: 4px; color: #000; }
.rule { width: 2px; height: 91px; margin-top: 7px; justify-self: center; background: #dcdde0; }
.stack { display: flex; flex-direction: column; padding-top: 3px; }
.stack-loose { gap: 1px; padding-top: 4px; }
.small { display: flex; align-items: center; gap: 4px; height: 32px; white-space: nowrap; }
button:disabled { color: #8d8d8d; }
button:disabled .caret { color: #6d6d6d; }

/* Address row */
.location { display: flex; flex: none; height: 51px; padding: 8px 11px 9px 19px; }
.history { display: flex; align-items: center; width: 139px; gap: 18px; }
.back { margin-right: 7px; }
.address { display: flex; flex: 1; min-width: 0; align-items: center; border: 1px solid #d9d9d9; padding-left: 3px; }
.crumbs { display: flex; flex: 1; min-width: 0; white-space: nowrap; overflow: hidden; padding: 2px 0 0 10px; font-family: "Noto Sans", sans-serif; }
.crumb { display: flex; align-items: center; }
.chevron { width: 8px; height: 12px; margin: 0 12px; }
.crumb:first-child .chevron { margin-left: 0; }
.drop { width: 22px; }
.refresh { width: 26px; height: 32px; border-left: 1px solid #d9d9d9; }
.search { display: flex; align-items: center; width: 148px; margin-left: 12px; padding: 0 12px 0 10px; border: 1px solid #d9d9d9; }
.search input { flex: 1; width: 0; min-width: 0; padding: 2px 0 0; border: 0; outline: 0; font: inherit; font-size: 16px; color: #6d6d6d; }
.search input::placeholder { color: #757575; opacity: 1; }

/* Body */
.content { display: flex; flex: 1; min-height: 0; }
.sidebar { display: flex; flex: none; width: 238px; overflow: hidden; border-right: 2px solid #f5f5f5; padding-right: 2px; }
.tree { flex: 1; min-width: 0; overflow: hidden; margin-right: 1px; }
.node { display: flex; align-items: center; gap: 5px; height: 36px; padding-left: 48px; }
.node-root { margin: 12px 0; padding-left: 36px; }
.node-root + .node-root { margin-bottom: 0; }
.node-text { flex: 1; min-width: 0; padding-top: 2px; overflow: hidden; white-space: nowrap; }
.node-pin { width: 16px; height: 16px; margin: 0 4px 0 -3px; }
.node-current { background: #d9d9d9; }
.scrollbar { display: flex; flex-direction: column; width: 25px; background: #f0f0f0; }
.scroll-button { height: 27px; }
.track { flex: 1; display: flex; flex-direction: column; }
.track::before { content: ""; flex: 61; }
.thumb { flex: 524; width: 24px; background: #cdcdcd; }
.track::after { content: ""; flex: 88; }

.files { flex: 1; min-width: 0; overflow: hidden; }
.list { width: 100%; max-width: 1604px; table-layout: fixed; border-collapse: collapse; white-space: nowrap; color: #6d6d6d; }
.col-date { width: 203px; }
.col-type { width: 371px; }
.col-size { width: 135px; }
th { padding: 0 0 10px; font-weight: 400; text-align: left; color: #4c607a; }
.head { position: relative; height: 42px; padding: 10px 0 0 9px; border-right: 1px solid #e5e5e5; }
th:first-child .head { padding-left: 28px; }
.sort { position: absolute; top: 1px; left: 50%; margin-left: 4px; }
td { height: 32px; padding: 0 0 0 9px; overflow: hidden; }
td:first-child { padding-left: 30px; color: #000; font-family: "Noto Sans", sans-serif; }
.file { display: flex; align-items: center; gap: 5px; }
.size { padding: 0 12px 0 0; text-align: right; }
.size-clipped { padding-right: 17px; }

/* Status bar */
.status { display: flex; flex: none; height: 35px; justify-content: space-between; color: #26405f; }
.count { margin: 10px 0 9px 22px; padding-right: 17px; line-height: 16px; border-right: 1px solid #e8e8e8; }
.views { display: flex; padding-right: 7px; }
.view { width: 33px; height: 35px; }
.view-active { background: #cbe8f6; border: 1px solid #26a0da; }
.taskbar { display: flex; flex: none; height: 3px; background: #050b16; }
.task-open { width: 56px; margin-left: 511px; background: #3b3f47; }
.task-active { width: 26px; margin-left: 575px; background: #f0f0f0; }
```
